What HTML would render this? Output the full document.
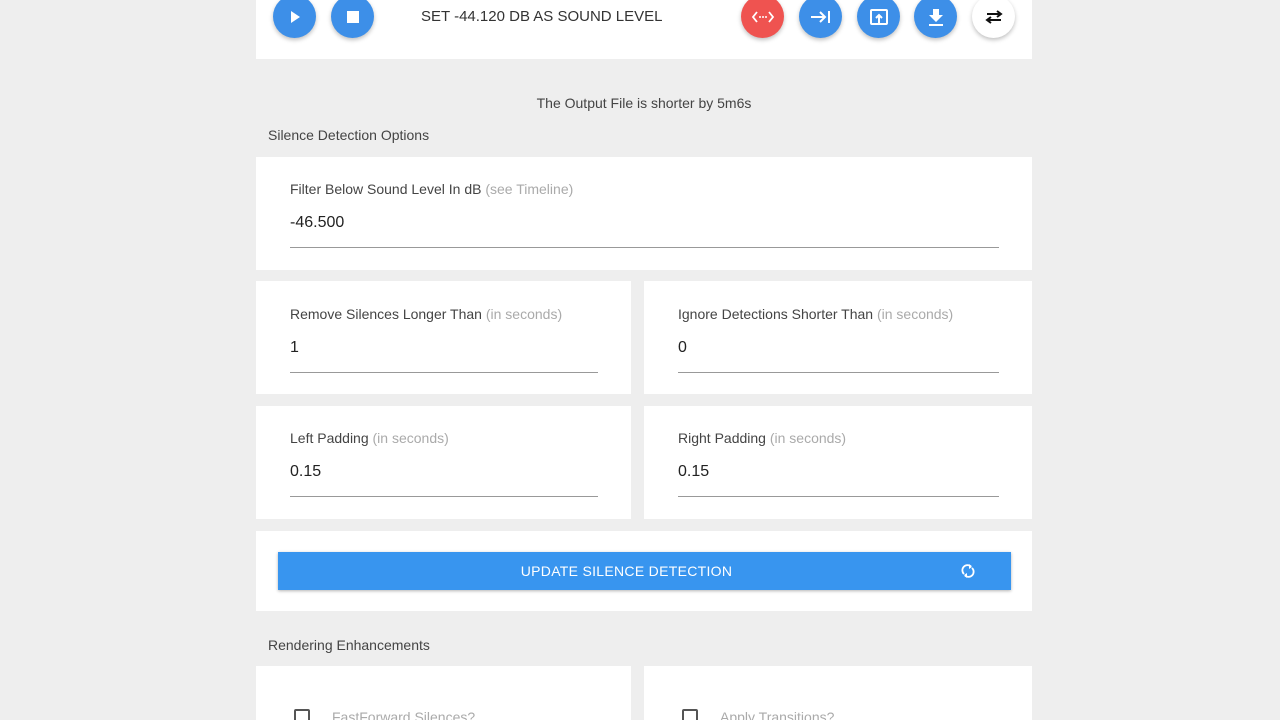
<!DOCTYPE html>
<html style="width:1280px;height:720px;overflow:hidden"><head><style>
body{margin:0;width:1280px;height:720px;background:#eeeeee;font-family:"Liberation Sans",sans-serif;position:relative;overflow:hidden;color:#333}
.card{position:absolute;background:#fff}
.fab{position:absolute;width:43px;height:43px;border-radius:50%;background:#3d8fe8;top:-5px;box-shadow:0 2px 4px rgba(0,0,0,.25);display:flex;align-items:center;justify-content:center}
.lbl{position:absolute;font-size:14px;color:#444}
.lbl span{color:#aaa}
.val{position:absolute;font-size:16px;color:#222}
.line{position:absolute;height:1px;background:#999}
.t{position:absolute;font-size:14px;color:#444}
</style></head><body>
<div class="card" style="left:256px;top:0;width:776px;height:59px"></div>
<div class="fab" style="left:273px"><svg width="16" height="16"><path d="M4 2L13 8L4 14Z" fill="#fff"/></svg></div>
<div class="fab" style="left:331px"><svg width="14" height="14"><rect x="1" y="1" width="12" height="12" fill="#fff"/></svg></div>
<div class="t" style="left:421px;top:8px;font-size:15px;color:#333">SET -44.120 DB AS SOUND LEVEL</div>
<div class="fab" style="left:741px;background:#ef5350"><svg width="24" height="16"><path d="M6 3L2 8L6 13M18 3L22 8L18 13" stroke="#fff" stroke-width="1.8" fill="none"/><circle cx="9" cy="8" r="1" fill="#fff"/><circle cx="12" cy="8" r="1" fill="#fff"/><circle cx="15" cy="8" r="1" fill="#fff"/></svg></div>
<div class="fab" style="left:799px"><svg width="22" height="16"><path d="M1 8H15M10 3L15 8L10 13M19 2V14" stroke="#fff" stroke-width="2" fill="none"/></svg></div>
<div class="fab" style="left:857px"><svg width="20" height="20"><rect x="2" y="3" width="16" height="14" rx="1" stroke="#fff" stroke-width="2" fill="none"/><path d="M10 16V9M7 11L10 8L13 11" stroke="#fff" stroke-width="2" fill="none"/></svg></div>
<div class="fab" style="left:914px"><svg width="16" height="18"><path d="M5 1H11V7H15L8 14L1 7H5Z M1 16H15V18H1Z" fill="#fff"/></svg></div>
<div class="fab" style="left:972px;background:#fff"><svg width="20" height="16"><path d="M3 5H16M13 2L17 5L13 8M17 11H4M7 8L3 11L7 14" stroke="#111" stroke-width="2" fill="none"/></svg></div>

<div class="t" style="left:0;width:1288px;text-align:center;top:95px">The Output File is shorter by 5m6s</div>
<div class="t" style="left:268px;top:127px">Silence Detection Options</div>

<div class="card" style="left:256px;top:157px;width:776px;height:113px"></div>
<div class="lbl" style="left:290px;top:181px">Filter Below Sound Level In dB <span>(see Timeline)</span></div>
<div class="val" style="left:290px;top:214px">-46.500</div>
<div class="line" style="left:290px;top:247px;width:709px"></div>

<div class="card" style="left:256px;top:281px;width:375px;height:113px"></div>
<div class="card" style="left:644px;top:281px;width:388px;height:113px"></div>
<div class="lbl" style="left:290px;top:306px">Remove Silences Longer Than <span>(in seconds)</span></div>
<div class="val" style="left:290px;top:339px">1</div>
<div class="line" style="left:290px;top:372px;width:308px"></div>
<div class="lbl" style="left:678px;top:306px">Ignore Detections Shorter Than <span>(in seconds)</span></div>
<div class="val" style="left:678px;top:339px">0</div>
<div class="line" style="left:678px;top:372px;width:321px"></div>

<div class="card" style="left:256px;top:406px;width:375px;height:113px"></div>
<div class="card" style="left:644px;top:406px;width:388px;height:113px"></div>
<div class="lbl" style="left:290px;top:430px">Left Padding <span>(in seconds)</span></div>
<div class="val" style="left:290px;top:463px">0.15</div>
<div class="line" style="left:290px;top:496px;width:308px"></div>
<div class="lbl" style="left:678px;top:430px">Right Padding <span>(in seconds)</span></div>
<div class="val" style="left:678px;top:463px">0.15</div>
<div class="line" style="left:678px;top:496px;width:321px"></div>

<div class="card" style="left:256px;top:531px;width:776px;height:80px"></div>
<div style="position:absolute;left:278px;top:552px;width:733px;height:38px;background:#3895ef;box-shadow:0 1px 3px rgba(0,0,0,.3);color:#fff;font-size:14px;line-height:38px;text-align:center;letter-spacing:.3px"><span style="position:relative;left:-18px">UPDATE SILENCE DETECTION</span>
<svg style="position:absolute;left:682px;top:11px" width="16" height="16"><path d="M4 11A5 5 0 0 1 11 3.5M12 5A5 5 0 0 1 5 12.5" stroke="#fff" stroke-width="1.8" fill="none"/><path d="M9 1L12 4L9 6ZM7 15L4 12L7 10Z" fill="#fff"/></svg></div>

<div class="t" style="left:268px;top:637px">Rendering Enhancements</div>
<div class="card" style="left:256px;top:666px;width:375px;height:60px"></div>
<div class="card" style="left:644px;top:666px;width:388px;height:60px"></div>
<div style="position:absolute;left:294px;top:709px;width:16px;height:16px;border:2px solid #555;border-radius:2px;box-sizing:border-box"></div>
<div class="t" style="left:332px;top:709px;color:#aaa">FastForward Silences?</div>
<div style="position:absolute;left:682px;top:709px;width:16px;height:16px;border:2px solid #555;border-radius:2px;box-sizing:border-box"></div>
<div class="t" style="left:720px;top:709px;color:#aaa">Apply Transitions?</div>
</body></html>
